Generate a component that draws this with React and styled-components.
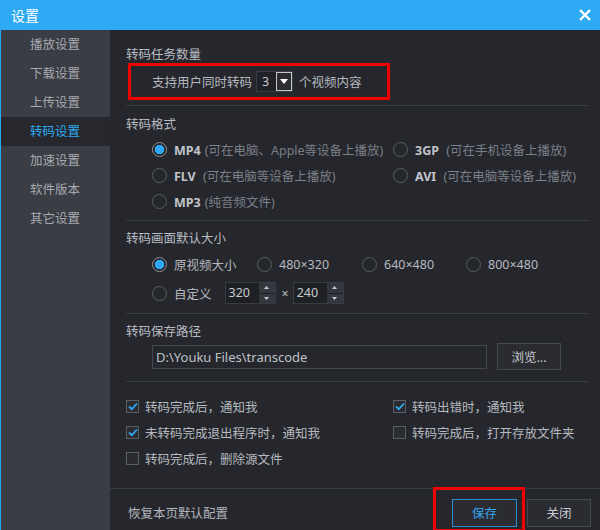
import React from "react";
import styled, { createGlobalStyle } from "styled-components";

const GlobalStyle = createGlobalStyle`
  body {
    margin: 0;
    background: #25272d;
    font-family: "Noto Sans", "Noto Sans CJK SC", sans-serif;
  }
  * { box-sizing: border-box; }
`;

const Window = styled.div`
  width: 600px;
  height: 530px;
  display: flex;
  flex-direction: column;
  background: #25272d;
  border-left: 1px solid #2aa8f2;
  font-size: 12.5px;
  color: #b6b9bf;
  overflow: hidden;
`;

const TitleBar = styled.div`
  height: 30px;
  flex: none;
  display: flex;
  align-items: center;
  justify-content: space-between;
  padding: 0 8px 0 10px;
  background: #2daaf3;
  color: #fff;
  font-size: 14px;
`;

const CloseBtn = styled.span`
  display: flex;
  width: 14px;
  height: 14px;
  align-items: center;
  justify-content: center;
`;

const Body = styled.div`
  flex: 1;
  display: flex;
  min-height: 0;
`;

const Sidebar = styled.ul`
  width: 109px;
  flex: none;
  margin: 0;
  padding: 0;
  list-style: none;
  background: #3a3d44;
`;

const NavItem = styled.li`
  height: 29px;
  line-height: 29px;
  padding-left: 29px;
  color: ${(p) => (p.$active ? "#2ea8f3" : "#a7aab0")};
  background: ${(p) => (p.$active ? "#26282e" : "transparent")};
`;

const Main = styled.div`
  flex: 1;
  display: flex;
  flex-direction: column;
`;

const Content = styled.div`
  flex: 1;
  display: flex;
  flex-direction: column;
  padding: 0 11px 0 16px;
`;

const Section = styled.div`
  padding: ${(p) => p.$pad};
  border-bottom: ${(p) => (p.$last ? "none" : "1px solid #393c42")};
  flex: ${(p) => (p.$grow ? 1 : "none")};
`;

const Heading = styled.div`
  height: 18px;
  line-height: 18px;
  color: #b9bcc2;
`;

const HighlightRow = styled.div`
  width: 262px;
  height: 37px;
  margin: -1px 0 0 2px;
  border: 3px solid #f00000;
  display: flex;
  align-items: center;
  padding-left: 21px;
  gap: 4px;
`;

const Select = styled.div`
  width: 37px;
  height: 21px;
  display: flex;
  align-items: center;
  justify-content: space-between;
  background: #1f2126;
  border: 1px solid #3a3d43;
  padding: 0 0 0 5px;
  margin-right: 2px;
  color: #c6c9ce;
`;

const SelectArrow = styled.span`
  width: 16px;
  height: 19px;
  display: flex;
  align-items: center;
  justify-content: center;
  border: 1px solid #c4c6ca;
  background: #2b2d33;
`;

const Grid = styled.div`
  display: grid;
  grid-template-columns: ${(p) => p.$cols};
  grid-auto-rows: 26px;
  row-gap: ${(p) => p.$gap || 0}px;
  margin-top: ${(p) => p.$mt || 0}px;
  padding-left: ${(p) => p.$pl || 0}px;
`;

const Option = styled.label`
  display: flex;
  align-items: center;
  white-space: nowrap;
  gap: ${(p) => p.$gap || 7}px;
`;

const RadioCircle = styled.span`
  width: 15px;
  height: 15px;
  flex: none;
  border-radius: 50%;
  border: 1.5px solid ${(p) => (p.$checked ? "#8d9097" : "#5a5d64")};
  background: ${(p) =>
    p.$checked ? "radial-gradient(circle, #2ea8f5 0 4.6px, transparent 5px)" : "transparent"};
`;

const FormatName = styled.span`
  font-weight: 700;
  color: #c1c4ca;
  margin-right: 4px;
`;

const Note = styled.span`
  color: #7b7f87;
`;

const SizeRow = styled.div`
  grid-column: 1 / -1;
  display: flex;
  align-items: center;
`;

const SizeLabel = styled.span`
  margin: 0 13px 0 7px;
`;

const Spin = styled.div`
  width: 51px;
  height: 22px;
  display: flex;
  align-items: stretch;
  background: #1e2024;
  border: 1px solid #383b41;
`;

const SpinValue = styled.span`
  flex: 1;
  padding-left: 3px;
  line-height: 20px;
  color: #c6c9ce;
`;

const SpinBtns = styled.span`
  width: 16px;
  display: flex;
  flex-direction: column;
  gap: 1px;
`;

const SpinBtn = styled.span`
  flex: 1;
  display: flex;
  align-items: center;
  justify-content: center;
  background: #34373d;
`;

const Times = styled.span`
  margin: 0 4px 0 6px;
  color: #b6b9bf;
`;

const PathRow = styled.div`
  display: flex;
  align-items: center;
  gap: 10px;
  margin-top: 2px;
  padding-left: 26px;
  height: 27px;
`;

const PathInput = styled.div`
  width: 335px;
  height: 24px;
  line-height: 22px;
  padding-left: 3px;
  border: 1px solid #44474d;
  color: #bfc2c7;
  font-size: 13px;
`;

const Button = styled.button`
  width: ${(p) => p.$w}px;
  height: ${(p) => p.$h}px;
  padding: 0;
  font: inherit;
  background: #2a2c32;
  border: 1px solid ${(p) => (p.$primary ? "#2d8fd2" : "#45484e")};
  color: ${(p) => (p.$primary ? "#35a6ef" : "#c8cbd0")};
`;

const CheckBox = styled.span`
  width: 13px;
  height: 13px;
  flex: none;
  display: flex;
  align-items: center;
  justify-content: center;
  border: 1px solid #5b5e65;
  background: #2a2c31;
`;

const Footer = styled.div`
  height: 42px;
  flex: none;
  display: flex;
  align-items: center;
  gap: 10px;
  padding: 8px 9px 2px 18px;
  border-top: 1px solid #393c42;
`;

const FooterText = styled.span`
  margin-right: auto;
  color: #b3b6bc;
`;

const Marked = styled.span`
  position: relative;
  display: flex;

  &::before {
    content: "";
    position: absolute;
    top: -12px;
    left: -19px;
    right: -8px;
    bottom: -5px;
    border: 3px solid #f00000;
    pointer-events: none;
  }
`;

const Radio = ({ checked, children }) => (
  <Option>
    <RadioCircle $checked={checked} />
    <span>{children}</span>
  </Option>
);

const Check = ({ checked, children }) => (
  <Option $gap={6}>
    <CheckBox>
      {checked && (
        <svg width="10" height="9" viewBox="0 0 10 9">
          <path d="M1 4.5 L3.8 7.2 L9 1.5" fill="none" stroke="#2ea8f3" strokeWidth="1.8" />
        </svg>
      )}
    </CheckBox>
    <span>{children}</span>
  </Option>
);

const Spinner = ({ value }) => (
  <Spin>
    <SpinValue>{value}</SpinValue>
    <SpinBtns>
      <SpinBtn>
        <svg width="5" height="3" viewBox="0 0 5 3"><path d="M0 3 L2.5 0 L5 3Z" fill="#c8cacd" /></svg>
      </SpinBtn>
      <SpinBtn>
        <svg width="5" height="3" viewBox="0 0 5 3"><path d="M0 0 L2.5 3 L5 0Z" fill="#c8cacd" /></svg>
      </SpinBtn>
    </SpinBtns>
  </Spin>
);

const nav = ["播放设置", "下载设置", "上传设置", "转码设置", "加速设置", "软件版本", "其它设置"];

const formats = [
  { name: "MP4", note: "(可在电脑、Apple等设备上播放)", checked: true },
  { name: "3GP", note: " (可在手机设备上播放)" },
  { name: "FLV", note: " (可在电脑等设备上播放)" },
  { name: "AVI", note: " (可在电脑等设备上播放)" },
  { name: "MP3", note: "(纯音频文件)" },
];

const sizes = ["原视频大小", "480×320", "640×480", "800×480"];

const checks = [
  { label: "转码完成后，通知我", checked: true },
  { label: "转码出错时，通知我", checked: true },
  { label: "未转码完成退出程序时，通知我", checked: true },
  { label: "转码完成后，打开存放文件夹" },
  { label: "转码完成后，删除源文件" },
];

export default function App() {
  return (
    <>
      <GlobalStyle />
      <Window>
        <TitleBar>
          <span>设置</span>
          <CloseBtn>
            <svg width="12" height="12" viewBox="0 0 12 12">
              <path d="M1 1 L11 11 M11 1 L1 11" stroke="#fff" strokeWidth="2.4" />
            </svg>
          </CloseBtn>
        </TitleBar>
        <Body>
          <Sidebar>
            {nav.map((n) => (
              <NavItem key={n} $active={n === "转码设置"}>{n}</NavItem>
            ))}
          </Sidebar>
          <Main>
            <Content>
              <Section $pad="16px 0 5px">
                <Heading>转码任务数量</Heading>
                <HighlightRow>
                  <span>支持用户同时转码</span>
                  <Select>
                    <span>3</span>
                    <SelectArrow>
                      <svg width="8" height="5" viewBox="0 0 8 5"><path d="M0 0 L8 0 L4 5Z" fill="#fff" /></svg>
                    </SelectArrow>
                  </Select>
                  <span>个视频内容</span>
                </HighlightRow>
              </Section>

              <Section $pad="10px 0 6px">
                <Heading>转码格式</Heading>
                <Grid $cols="241px 1fr" $mt={2} $pl={26}>
                  {formats.map((f) => (
                    <Option key={f.name}>
                      <RadioCircle $checked={f.checked} />
                      <span>
                        <FormatName>{f.name}</FormatName>
                        <Note>{f.note}</Note>
                      </span>
                    </Option>
                  ))}
                </Grid>
              </Section>

              <Section $pad="9px 0 7px">
                <Heading>转码画面默认大小</Heading>
                <Grid $cols="105px 105px 104px 1fr" $mt={3} $gap={3} $pl={26}>
                  {sizes.map((s, i) => (
                    <Radio key={s} checked={i === 0}>{s}</Radio>
                  ))}
                  <SizeRow>
                    <RadioCircle />
                    <SizeLabel>自定义</SizeLabel>
                    <Spinner value="320" />
                    <Times>×</Times>
                    <Spinner value="240" />
                  </SizeRow>
                </Grid>
              </Section>

              <Section $pad="9px 0 11px">
                <Heading>转码保存路径</Heading>
                <PathRow>
                  <PathInput>D:\Youku Files\transcode</PathInput>
                  <Button $w={64} $h={27}>浏览...</Button>
                </PathRow>
              </Section>

              <Section $pad="11px 0 0" $last $grow>
                <Grid $cols="267px 1fr">
                  {checks.map((c) => (
                    <Check key={c.label} checked={c.checked}>{c.label}</Check>
                  ))}
                </Grid>
              </Section>
            </Content>
            <Footer>
              <FooterText>恢复本页默认配置</FooterText>
              <Marked>
                <Button $primary $w={65} $h={28}>保存</Button>
              </Marked>
              <Button $w={64} $h={28}>关闭</Button>
            </Footer>
          </Main>
        </Body>
      </Window>
    </>
  );
}
